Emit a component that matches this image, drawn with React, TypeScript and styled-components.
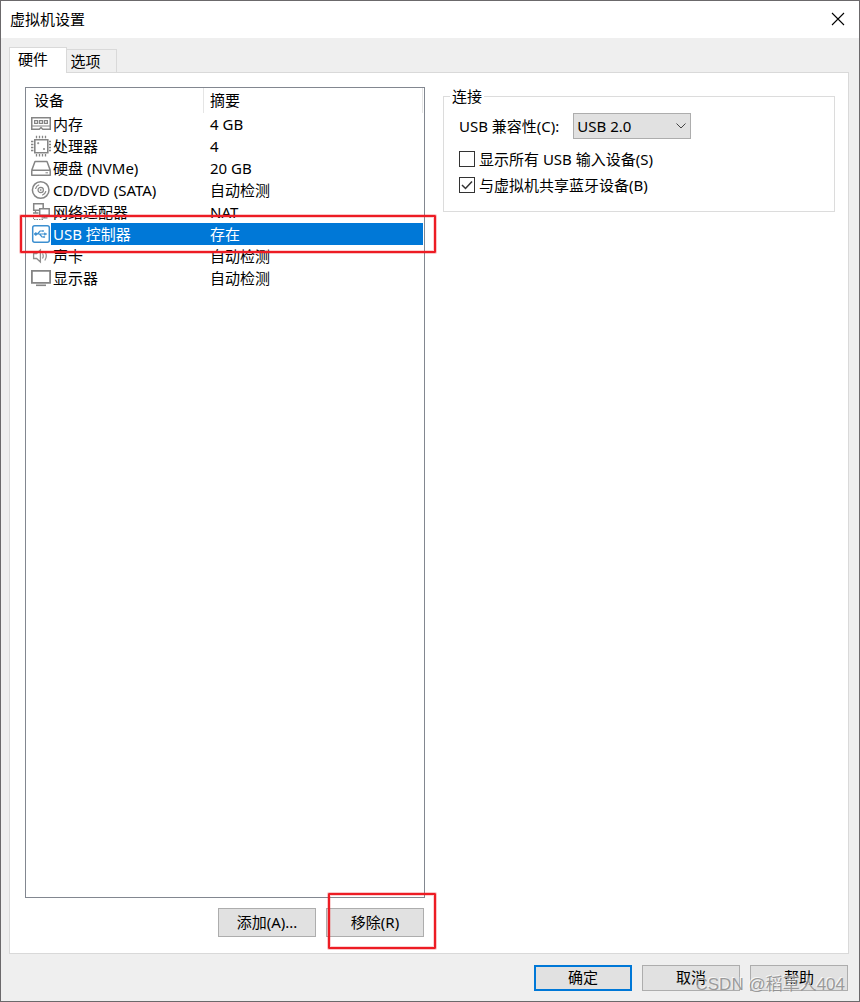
import React from 'react';
import styled, { createGlobalStyle, css } from 'styled-components';

const GlobalStyle = createGlobalStyle`
  *, *::before, *::after { box-sizing: border-box; }
  body {
    margin: 0;
    font-family: "Noto Sans", "Noto Sans CJK SC", sans-serif;
    font-size: 15px;
    line-height: 20px;
    color: #000;
  }
  button, select, input { font: inherit; color: inherit; margin: 0; }
`;

const Dialog = styled.main`
  position: relative;
  display: flex;
  flex-direction: column;
  min-height: 100vh;
  border: 1px solid #6b696b;
  background: #efefef;
`;

const TitleBar = styled.header`
  display: flex;
  align-items: center;
  justify-content: space-between;
  height: 37px;
  padding: 0 14px 2px 9px;
  background: #fff;
`;

const Title = styled.h1`
  margin: 0;
  font-size: 15px;
  font-weight: 400;
`;

const CloseButton = styled.button`
  display: flex;
  padding: 0;
  border: 0;
  background: none;
`;

const TabList = styled.div`
  display: flex;
  align-items: flex-end;
  height: 34px;
  padding: 0 8px;
`;

const Tab = styled.button<{ $active?: boolean }>`
  border: 1px solid #d9d9d9;
  border-bottom: 0;
  background: #efefef;
  ${({ $active }) =>
    $active
      ? css`
          z-index: 1;
          width: 58px;
          height: 26px;
          padding: 0 10px 4px 0;
          margin-bottom: -1px;
          background: #fff;
        `
      : css`
          width: 51px;
          height: 23px;
          padding: 0 12px 0 0;
          margin-left: -1px;
        `}
`;

const Page = styled.section`
  display: flex;
  flex: 1;
  gap: 18px;
  margin: 0 10px 0 8px;
  padding: 14px 13px 16px 15px;
  border: 1px solid #d9d9d9;
  background: #fff;
`;

const DeviceColumn = styled.div`
  display: flex;
  flex-direction: column;
  flex: 0 0 400px;
`;

const DeviceBox = styled.div`
  flex: 1;
  padding-right: 1px;
  border: 1px solid #828790;
`;

const DeviceTable = styled.table`
  width: 100%;
  table-layout: fixed;
  border-collapse: separate;
  border-spacing: 0;
`;

const IconCol = styled.col`
  width: 25px;
`;

const NameCol = styled.col`
  width: 153px;
`;

const HeadCell = styled.th<{ $first?: boolean }>`
  height: 25px;
  padding: 0 0 2px ${({ $first }) => ($first ? 8 : 6)}px;
  border-right: 1px solid #e5e5e5;
  font-weight: 400;
  text-align: left;
`;

const DeviceRow = styled.tr<{ $selected?: boolean }>`
  position: relative;
  height: 22px;
  ${({ $selected }) =>
    $selected &&
    css`
      color: #fff;
      td + td { background: #0078d7; }
    `}
`;

const IconCell = styled.td`
  padding: 0 0 0 5px;
  svg { display: block; }
`;

const NameCell = styled.td`
  padding: 0 0 0 2px;
  white-space: nowrap;
`;

const SummaryCell = styled.td`
  padding: 0 0 0 6px;
  white-space: nowrap;
`;

const Marker = styled.span<{ $inset: string }>`
  position: absolute;
  z-index: 2;
  inset: ${({ $inset }) => $inset};
  border: 2px solid #ed1c24;
  border-radius: 1px;
  box-shadow: 0 0 0 1px rgba(237, 28, 36, 0.25), inset 0 0 0 1px rgba(237, 28, 36, 0.2);
  pointer-events: none;
`;

const Actions = styled.div`
  display: flex;
  justify-content: flex-end;
  gap: 10px;
  padding: 10px 1px 0 0;
`;

const Marked = styled.div`
  position: relative;
`;

const PushButton = styled.button<{ $primary?: boolean; $tall?: boolean }>`
  display: block;
  width: 98px;
  height: ${({ $tall }) => ($tall ? 29 : 26)}px;
  padding: 0 0 2px;
  border: ${({ $primary }) => ($primary ? '2px solid #0078d7' : '1px solid #adadad')};
  background: #e1e1e1;
`;

const Group = styled.fieldset`
  flex: 1;
  align-self: flex-start;
  min-width: 0;
  margin: -1px 0 0;
  padding: 7px 15px 16px;
  border: 1px solid #dcdcdc;
`;

const Legend = styled.legend`
  margin-left: -9px;
  padding: 0 2px;
`;

const Field = styled.div`
  display: flex;
  align-items: center;
  gap: 14px;
  height: 26px;
  margin-bottom: 10px;
`;

const SelectWrap = styled.div`
  position: relative;
  svg { position: absolute; right: 5px; top: 10px; pointer-events: none; }
`;

const Select = styled.select`
  appearance: none;
  width: 118px;
  height: 26px;
  padding: 0 20px 0 3px;
  border: 1px solid #adadad;
  border-radius: 0;
  background: #e1e1e1;
`;

const CheckLabel = styled.label`
  display: flex;
  align-items: center;
  gap: 4px;
  height: 20px;
  & + & { margin-top: 6px; }
`;

const CheckBox = styled.input`
  appearance: none;
  width: 16px;
  height: 16px;
  border: 1px solid #333;
  background: #fff;
  &:checked {
    background: #fff
      url("data:image/svg+xml,%3Csvg xmlns='http://www.w3.org/2000/svg' viewBox='0 0 14 14'%3E%3Cpath d='M2 7l3.5 3.5L12 3.5' fill='none' stroke='%23333' stroke-width='1.5'/%3E%3C/svg%3E");
  }
`;

const Footer = styled.footer`
  display: flex;
  justify-content: flex-end;
  gap: 10px;
  padding: 11px 11px 10px;
`;

const Watermark = styled.div`
  position: absolute;
  z-index: 3;
  right: 14px;
  bottom: 6px;
  font-family: "Liberation Sans", "Noto Sans CJK SC", sans-serif;
  font-size: 17px;
  color: rgba(140, 140, 140, 0.85);
  text-shadow: -1px -1px 0 rgba(255, 255, 255, 0.7);
  pointer-events: none;
`;

const Icon = ({ children, stroke = '#858585' }: { children: React.ReactNode; stroke?: string }) => (
  <svg width="20" height="22" viewBox="0 0 20 22" fill="none" stroke={stroke} aria-hidden="true">
    {children}
  </svg>
);

const icons = {
  memory: (
    <Icon>
      <path d="M.75 4.75h18.500v11.500h-7.500l-1.750-1.750-1.750 1.750h-7.500z" strokeWidth="1.500" />
      <path d="M3.600 7.600h3v2.800h-3zM8.500 7.600h3v2.800h-3zM13.400 7.600h3v2.800h-3z" strokeWidth="1.200" />
      <path d="M1 13h18" />
    </Icon>
  ),
  cpu: (
    <Icon>
      <path d="M3.800 4.800h13v13h-13z" strokeWidth="1.600" />
      <path
        d="M5.500 .8v2.400M8.500 .8v2.400M11.500 .8v2.400M14.500 .8v2.400M5.500 19v2.400M8.500 19v2.400M11.500 19v2.400M14.500 19v2.400M0 6.500h2.400M0 9.500h2.400M0 12.500h2.400M0 15.500h2.400M18 6.500h2M18 9.500h2M18 12.500h2M18 15.500h2"
        strokeWidth="1.300"
      />
      <path d="M6.700 7.700h1v1h-1zM12.500 13.500h1v1h-1z" />
    </Icon>
  ),
  disk: (
    <Icon>
      <path d="M.75 13.300L4 4.400h12l3.250 8.900M.75 13.300h18.500v4.900H.75z" strokeWidth="1.500" strokeLinejoin="round" />
      <path d="M14.500 15.800h2.500" />
    </Icon>
  ),
  disc: (
    <Icon>
      <circle cx="9.700" cy="11" r="8.300" strokeWidth="1.500" />
      <circle cx="9.700" cy="11" r="2.700" strokeWidth="1.200" />
      <circle cx="9.700" cy="11" r=".6" />
      <path d="M4.500 9.800a5.500 5.500 0 0 1 3.700-4M14.900 12.200a5.500 5.500 0 0 1-3.700 4" strokeWidth="1.200" />
    </Icon>
  ),
  network: (
    <Icon>
      <path d="M2.700 2.700h9.500v6.500h-9.500z" strokeWidth="1.500" />
      <path d="M4.500 9.500v2.200M2 12h5.500" strokeWidth="1.300" />
      <path d="M8.700 7.700h9.500v6.500h-9.500z" fill="#fff" strokeWidth="1.500" />
      <path d="M13.500 14.500v2M10.500 16.800h6" strokeWidth="1.300" />
      <path d="M2.500 14v5M3 18.500h10" strokeDasharray="1.500 1" />
    </Icon>
  ),
  usb: (
    <Icon stroke="#3c8fd0">
      <rect x="1.700" y="2.700" width="16.600" height="16.600" rx="2" strokeWidth="1.500" />
      <path d="M4 11h10M6.500 11l2.500-3h2.500M8.500 11l2.500 3h2" strokeWidth="1.200" />
      <circle cx="4.800" cy="11" r="1.200" fill="#3c8fd0" />
      <path d="M13.500 9.800l2.300 1.200-2.300 1.200zM11.500 7.500h1v1h-1zM12.700 13.500h1v1h-1z" fill="#3c8fd0" strokeWidth=".6" />
    </Icon>
  ),
  sound: (
    <Icon stroke="#909090">
      <path d="M2.600 8.500h3l3.800-3.500v12l-3.800-3.500h-3z" strokeWidth="1.300" />
      <path d="M11.500 8.500q1.500 2.500 0 5M13.800 6.500q3 4.500 0 9" strokeWidth="1.200" />
    </Icon>
  ),
  display: (
    <Icon>
      <path d="M.9 3.900h18.200v12H.9z" strokeWidth="1.800" />
      <path d="M5 18.300h10" strokeWidth="1.600" />
    </Icon>
  ),
};

const devices: { icon: keyof typeof icons; name: string; summary: string; selected?: boolean }[] = [
  { icon: 'memory', name: '内存', summary: '4 GB' },
  { icon: 'cpu', name: '处理器', summary: '4' },
  { icon: 'disk', name: '硬盘 (NVMe)', summary: '20 GB' },
  { icon: 'disc', name: 'CD/DVD (SATA)', summary: '自动检测' },
  { icon: 'network', name: '网络适配器', summary: 'NAT' },
  { icon: 'usb', name: 'USB 控制器', summary: '存在', selected: true },
  { icon: 'sound', name: '声卡', summary: '自动检测' },
  { icon: 'display', name: '显示器', summary: '自动检测' },
];

export default function App() {
  return (
    <>
      <GlobalStyle />
      <Dialog>
        <TitleBar>
          <Title>虚拟机设置</Title>
          <CloseButton type="button" aria-label="关闭">
            <svg width="14" height="14" viewBox="0 0 14 14" stroke="#000" strokeWidth="1.100">
              <path d="M1 1l12 12M13 1L1 13" />
            </svg>
          </CloseButton>
        </TitleBar>
        <TabList role="tablist">
          <Tab type="button" role="tab" aria-selected="true" $active>硬件</Tab>
          <Tab type="button" role="tab" aria-selected="false">选项</Tab>
        </TabList>
        <Page>
          <DeviceColumn>
            <DeviceBox>
              <DeviceTable>
                <colgroup>
                  <IconCol />
                  <NameCol />
                  <col />
                </colgroup>
                <thead>
                  <tr>
                    <HeadCell colSpan={2} $first>设备</HeadCell>
                    <HeadCell>摘要</HeadCell>
                  </tr>
                </thead>
                <tbody>
                  {devices.map((d) => (
                    <DeviceRow key={d.name} $selected={d.selected}>
                      <IconCell>{icons[d.icon]}</IconCell>
                      <NameCell>{d.name}</NameCell>
                      <SummaryCell>
                        {d.summary}
                        {d.selected && <Marker $inset="-8px -13px -8px -6px" />}
                      </SummaryCell>
                    </DeviceRow>
                  ))}
                </tbody>
              </DeviceTable>
            </DeviceBox>
            <Actions>
              <PushButton type="button" $tall>添加(A)...</PushButton>
              <Marked>
                <PushButton type="button" $tall>移除(R)</PushButton>
                <Marker $inset="-15px -12px -12px 2px" />
              </Marked>
            </Actions>
          </DeviceColumn>
          <Group>
            <Legend>连接</Legend>
            <Field>
              <label htmlFor="usb-version">USB 兼容性(C):</label>
              <SelectWrap>
                <Select id="usb-version" defaultValue="USB 2.0">
                  <option>USB 2.0</option>
                </Select>
                <svg width="10" height="6" viewBox="0 0 10 6" fill="none" stroke="#444">
                  <path d="M.5.5L5 5 9.500.5" />
                </svg>
              </SelectWrap>
            </Field>
            <CheckLabel>
              <CheckBox type="checkbox" />
              显示所有 USB 输入设备(S)
            </CheckLabel>
            <CheckLabel>
              <CheckBox type="checkbox" defaultChecked />
              与虚拟机共享蓝牙设备(B)
            </CheckLabel>
          </Group>
        </Page>
        <Footer>
          <PushButton type="button" $primary>确定</PushButton>
          <PushButton type="button">取消</PushButton>
          <PushButton type="button">帮助</PushButton>
        </Footer>
        <Watermark>CSDN @稻草人404</Watermark>
      </Dialog>
    </>
  );
}
